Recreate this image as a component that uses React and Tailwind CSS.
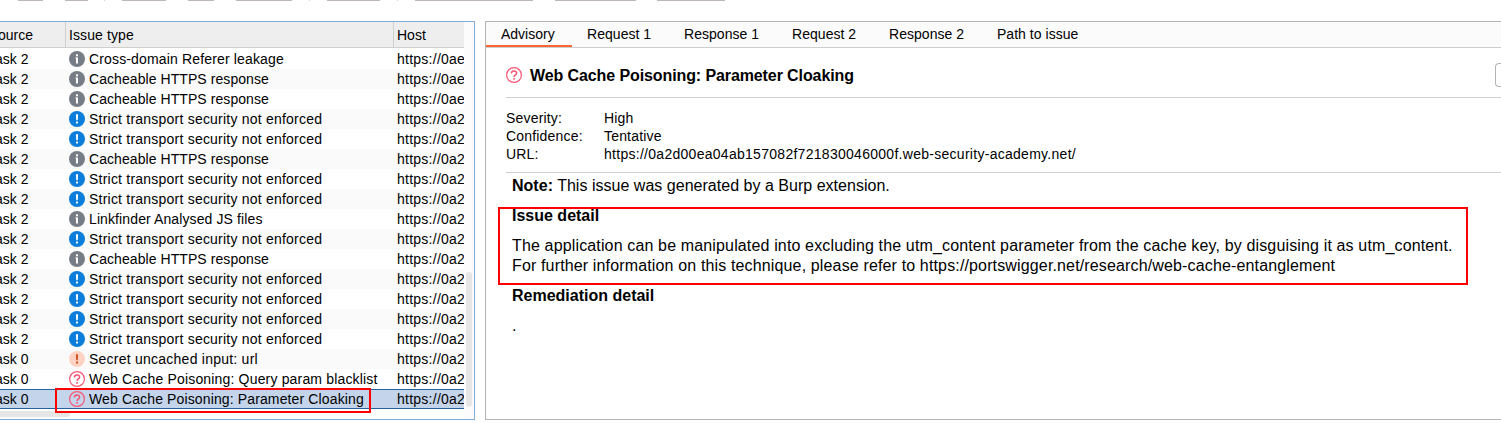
const INFO = 'info', LOW = 'low', MEDIUM = 'medium', HIGH = 'high';

const issues = [
  ['ask 2', INFO, 'Cross-domain Referer leakage', 'https://0ae'],
  ['ask 2', INFO, 'Cacheable HTTPS response', 'https://0ae'],
  ['ask 2', INFO, 'Cacheable HTTPS response', 'https://0ae'],
  ['ask 2', LOW, 'Strict transport security not enforced', 'https://0a2'],
  ['ask 2', LOW, 'Strict transport security not enforced', 'https://0a2'],
  ['ask 2', INFO, 'Cacheable HTTPS response', 'https://0a2'],
  ['ask 2', LOW, 'Strict transport security not enforced', 'https://0a2'],
  ['ask 2', LOW, 'Strict transport security not enforced', 'https://0a2'],
  ['ask 2', INFO, 'Linkfinder Analysed JS files', 'https://0a2'],
  ['ask 2', LOW, 'Strict transport security not enforced', 'https://0a2'],
  ['ask 2', INFO, 'Cacheable HTTPS response', 'https://0a2'],
  ['ask 2', LOW, 'Strict transport security not enforced', 'https://0a2'],
  ['ask 2', LOW, 'Strict transport security not enforced', 'https://0a2'],
  ['ask 2', LOW, 'Strict transport security not enforced', 'https://0a2'],
  ['ask 2', LOW, 'Strict transport security not enforced', 'https://0a2'],
  ['ask 0', MEDIUM, 'Secret uncached input: url', 'https://0a2'],
  ['ask 0', HIGH, 'Web Cache Poisoning: Query param blacklist', 'https://0a2'],
  ['ask 0', HIGH, 'Web Cache Poisoning: Parameter Cloaking', 'https://0a2'],
];

const tracking = {
  'Cross-domain Referer leakage': 'tracking-[0.15px]',
  'Cacheable HTTPS response': 'tracking-[0.07px]',
  'Strict transport security not enforced': 'tracking-[0.22px]',
  'Linkfinder Analysed JS files': 'tracking-[0.11px]',
  'Secret uncached input: url': 'tracking-[0.24px]',
  'Web Cache Poisoning: Query param blacklist': 'tracking-[0.17px]',
  'Web Cache Poisoning: Parameter Cloaking': 'tracking-[0.13px]',
};

function SeverityIcon({ kind }) {
  if (kind === HIGH) {
    return (
      <svg className="size-4 shrink-0" viewBox="0 0 16 16" fill="none">
        <circle cx="8" cy="8" r="7.4" stroke="#fa5573" strokeWidth="1.2" />
        <path d="M5.4 6.5C5.4 4.9 6.4 4 8 4s2.6.9 2.6 2.2c0 1.7-2.5 1.7-2.5 3.7" stroke="#fa5573" strokeWidth="1.5" />
        <rect x="7.2" y="11.1" width="1.7" height="1.6" fill="#fa5573" />
      </svg>
    );
  }
  if (kind === INFO) {
    return (
      <svg className="size-4 shrink-0" viewBox="0 0 16 16">
        <circle cx="8" cy="8" r="8" fill="#777d86" />
        <rect x="7" y="3.3" width="2" height="2" fill="#fff" />
        <path d="M6.4 6.4H9v6.2H7V7.6h-.6z" fill="#fff" />
      </svg>
    );
  }
  const bg = kind === LOW ? '#0b7ddb' : '#fed3c4';
  const fg = kind === LOW ? '#ffffff' : '#d4501f';
  return (
    <svg className="size-4 shrink-0" viewBox="0 0 16 16">
      <circle cx="8" cy="8" r="8" fill={bg} />
      <path d="M6.9 3.3h2.2l-.3 6H7.2z" fill={fg} />
      <rect x="7" y="10.6" width="2" height="2" rx=".5" fill={fg} />
    </svg>
  );
}

function Toolbar() {
  return (
    <div className="flex h-[21px] items-start">
      <i className="ml-[18px] h-px w-[25px] bg-[#bdb6b8]" />
      <i className="ml-[22px] h-px w-[23px] bg-[#bdb6b8]" />
      <i className="ml-[16px] h-px w-px bg-[#d4d4d4]" />
      <i className="ml-[17px] h-px w-[44px] bg-[#bdb6b8]" />
      <i className="ml-[22px] h-px w-[26px] bg-[#bdb6b8]" />
      <i className="ml-[22px] h-px w-[56px] bg-[#bdb6b8]" />
      <i className="ml-[17px] h-px w-px bg-[#d4d4d4]" />
      <i className="ml-[17px] h-px w-[53px] bg-[#bdb6b8]" />
      <i className="ml-[17px] h-px w-px bg-[#d4d4d4]" />
      <i className="ml-[17px] h-px w-[118px] bg-[#bdb6b8]" />
      <i className="ml-[22px] h-px w-[81px] bg-[#bdb6b8]" />
      <i className="ml-[21px] h-px w-[68px] bg-[#bdb6b8]" />
    </div>
  );
}

function IssueTable() {
  return (
    <section className="flex h-[399px] w-[475px] shrink-0 border-y border-r border-[#82addb]">
      <div className="flex w-[464px] flex-col overflow-hidden">
        <div className="flex h-[26px] shrink-0 border-b border-[#cfcfcf] bg-[#eeeeee] leading-[27px]">
          <div className="w-[66px] border-r border-[#cfcfcf]"><span className="-ml-[2px]">ource</span></div>
          <div className="w-[328px] border-r border-[#cfcfcf] pl-[3px] tracking-[0.1px]">Issue type</div>
          <div className="pl-[3px]">Host</div>
        </div>
        <div className="mt-px flex flex-col">
          {issues.map(([task, kind, name, host], i) => (
            <div
              key={i}
              className={
                'flex h-5 items-center leading-5 whitespace-nowrap ' +
                (i === 17
                  ? 'bg-[#c4d4eb] shadow-[inset_0_1px_#26619c,inset_0_-1px_#26619c]'
                  : i % 2
                    ? 'bg-[#fafafa]'
                    : 'bg-white')
              }
            >
              <span className="w-[69px] shrink-0"><span className="-ml-[5px]">{task}</span></span>
              <span className="flex w-[328px] shrink-0 items-center gap-1">
                <SeverityIcon kind={kind} />
                <span className={tracking[name]}>{name}</span>
              </span>
              <span className="tracking-[0.25px]">{host}</span>
            </div>
          ))}
        </div>
        <div className="mt-[2px] h-[6px] w-[70px] rounded-r-full bg-[#e6e6e6]" />
      </div>
      <div className="flex w-[10px] flex-col bg-[#fcfcfc]">
        <div className="mt-[250px] ml-[2px] h-[135px] w-[6px] rounded-full bg-[#e6e6e6]" />
      </div>
    </section>
  );
}

function Advisory() {
  return (
    <section className="ml-[10px] flex h-[399px] flex-1 flex-col overflow-hidden border-y border-l border-[#b4b4b4]">
      <nav className="flex h-[26px] shrink-0 border-b border-[#cfcfcf] bg-[#fbfbfb] leading-[25px] whitespace-nowrap">
        <div className="w-[86px] pl-[15px] shadow-[inset_0_-2px_#ff6633]">Advisory</div>
        <div className="w-[97px] pl-[15px] tracking-[0.04px]">Request 1</div>
        <div className="w-[108px] pl-[15px] tracking-[0.04px]">Response 1</div>
        <div className="w-[97px] pl-[15px] tracking-[0.04px]">Request 2</div>
        <div className="w-[108px] pl-[15px] tracking-[0.04px]">Response 2</div>
        <div className="pl-[15px] tracking-[0.03px]">Path to issue</div>
      </nav>
      <div className="ml-5 flex flex-col">
        <header className="flex h-[50px] items-center border-b border-[#cfcfcf] pb-[6px]">
          <div className="mt-[10px] flex flex-1 items-center">
            <SeverityIcon kind={HIGH} />
            <h1 className="mt-[2px] ml-2 text-[16px] leading-6 font-bold tracking-[-0.1px]">Web Cache Poisoning: Parameter Cloaking</h1>
          </div>
          <div className="mt-[11px] h-6 w-[6px] rounded-l-[4px] border-y border-l border-[#b4b4b4]" />
        </header>
        <dl className="grid h-[75px] grid-cols-[98px_1fr] content-start border-b border-[#cfcfcf] pt-[11px] leading-[18px] tracking-[0.18px]">
          <dt>Severity:</dt><dd>High</dd>
          <dt>Confidence:</dt><dd>Tentative</dd>
          <dt>URL:</dt><dd className="tracking-[0.28px]">https://0a2d00ea04ab157082f721830046000f.web-security-academy.net/</dd>
        </dl>
        <article className="ml-[6px] flex flex-col gap-[10px] pt-[3px] text-[16px] leading-5 whitespace-nowrap">
          <p className="tracking-[0.02px]"><b>Note:</b> This issue was generated by a Burp extension.</p>
          <h2 className="font-bold">Issue detail</h2>
          <p className="tracking-[0.145px]">
            The application can be manipulated into excluding the utm_content parameter from the cache key, by disguising it as utm_content.<br />
            For further information on this technique, please refer to https://portswigger.net/research/web-cache-entanglement
          </p>
          <h2 className="font-bold">Remediation detail</h2>
          <p>.</p>
        </article>
      </div>
    </section>
  );
}

export default function App() {
  return (
    <main className="relative h-[423px] w-[1501px] overflow-hidden bg-white font-['Liberation_Sans',Arial,sans-serif] text-[14px] text-black">
      <Toolbar />
      <div className="flex">
        <IssueTable />
        <Advisory />
      </div>
      <div className="absolute top-[388px] left-[55px] h-[25px] w-[316px] border-2 border-[#ff0000]" />
      <div className="absolute top-[207px] left-[498px] h-[78px] w-[970px] border-2 border-[#ff0000]" />
    </main>
  );
}
